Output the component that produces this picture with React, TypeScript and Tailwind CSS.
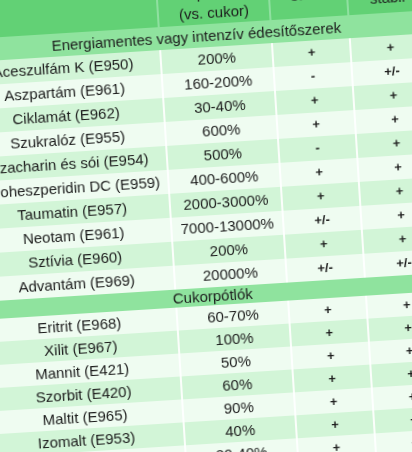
import React from "react";

type R = [string, string, string, string];

const sec1: R[] = [
  ["Aceszulfám K (E950)", "200%", "+", "+"],
  ["Aszpartám (E961)", "160-200%", "-", "+/-"],
  ["Ciklamát (E962)", "30-40%", "+", "+"],
  ["Szukralóz (E955)", "600%", "+", "+"],
  ["Szacharin és sói (E954)", "500%", "-", "+"],
  ["Neoheszperidin DC (E959)", "400-600%", "+", "+"],
  ["Taumatin (E957)", "2000-3000%", "+", "+"],
  ["Neotam (E961)", "7000-13000%", "+/-", "+"],
  ["Sztívia (E960)", "200%", "+", "+"],
  ["Advantám (E969)", "20000%", "+/-", "+/-"],
];

const sec2: R[] = [
  ["Eritrit (E968)", "60-70%", "+", "+"],
  ["Xilit (E967)", "100%", "+", "+"],
  ["Mannit (E421)", "50%", "+", "+"],
  ["Szorbit (E420)", "60%", "+", "+"],
  ["Maltit (E965)", "90%", "+", "+"],
  ["Izomalt (E953)", "40%", "+", "+"],
  ["Laktit (E966)", "30-40%", "+", "+"],
  ["Polidextróz", "10%", "+", "+"],
];

function Row({ r, green, tall }: { r: R; green: boolean; tall: boolean }) {
  return (
    <div
      className={`grid grid-cols-[194px_112px_78px_80px] ${tall ? "h-[24px]" : "h-[23px]"} ${
        green ? "bg-[#d2f5d7]" : "bg-[#effcf1]"
      }`}
    >
      <div className="flex items-center justify-center whitespace-nowrap">{r[0]}</div>
      <div className="flex items-center justify-center border-l-2 border-white/90 whitespace-nowrap">{r[1]}</div>
      <div className="flex items-center justify-center border-l-2 border-white/90 text-[13px] font-bold">{r[2]}</div>
      <div className="flex items-center justify-center border-l-2 border-white/90 text-[13px] font-bold">{r[3]}</div>
    </div>
  );
}

export default function App() {
  return (
    <div className="w-[412px] h-[452px] overflow-hidden bg-[#effcf1] text-[15px] leading-[18px] text-[#1c1c1c] font-['Liberation_Sans',Arial,sans-serif]">
      <div className="origin-top-left -rotate-[3.6deg] blur-[0.35px]">
        <div className="ml-[-41px] mt-[-43px] w-[464px]">
          <div className="grid grid-cols-[194px_112px_78px_80px] h-[80px] bg-[#62d175]">
            <div className="flex flex-col justify-end items-center pb-[44px]">Édesítőszer</div>
            <div className="flex flex-col justify-end items-center pb-[2px] border-l-2 border-[#8fe0a0] leading-[22px]">
              <span>Édesítő-</span>
              <span>képesség</span>
              <span className="leading-[18px]">(vs. cukor)</span>
            </div>
            <div className="flex flex-col justify-end items-center pb-[14px] border-l-2 border-[#8fe0a0]">
              <span>Hő-</span>
              <span>stabil</span>
            </div>
            <div className="flex flex-col justify-end items-center pb-[6px] border-l-2 border-[#8fe0a0]">
              <span>pH-</span>
              <span>stabil</span>
            </div>
          </div>
          <div className="flex items-center justify-center bg-[#8fe39e] h-[23px] pt-[1px]">
            Energiamentes vagy intenzív édesítőszerek
          </div>
          {sec1.map((r, i) => (
            <Row key={r[0]} r={r} green={i % 2 === 0} tall />
          ))}
          <div className="flex items-center justify-center bg-[#8fe39e] h-[18px]">Cukorpótlók</div>
          {sec2.map((r, i) => (
            <Row key={r[0]} r={r} green={i % 2 === 1} tall={false} />
          ))}
        </div>
      </div>
    </div>
  );
}
